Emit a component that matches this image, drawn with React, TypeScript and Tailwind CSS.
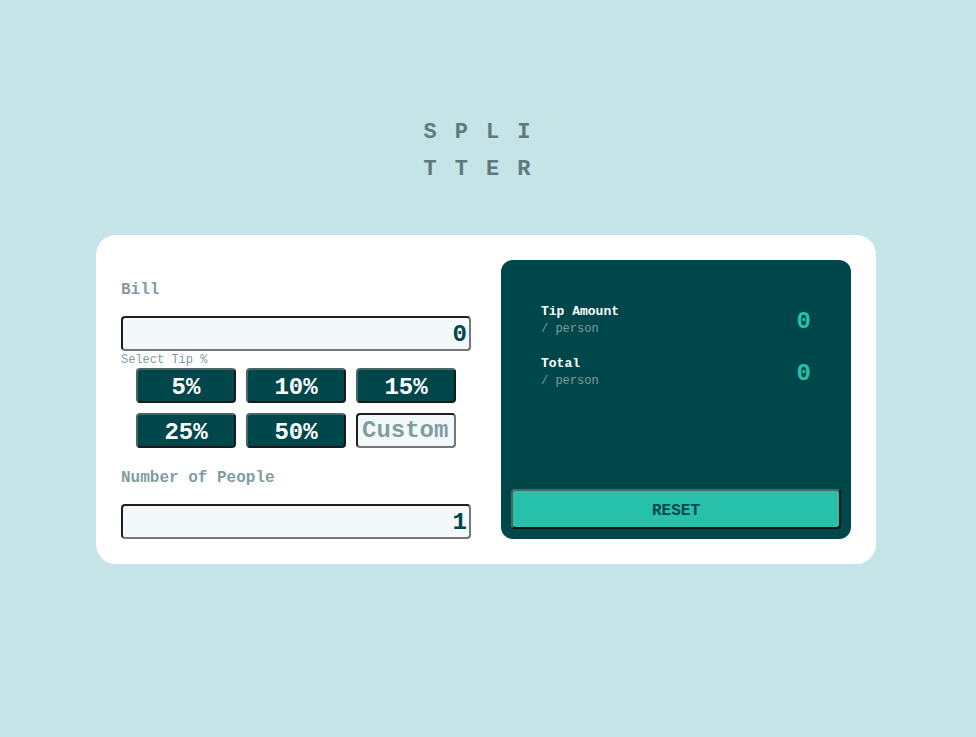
import { useState } from 'react'

const TIPS = [5, 10, 15, 25, 50]

const MONO = { fontFamily: '"Liberation Mono", "DejaVu Sans Mono", monospace' }

function ResultRow({ label, value }: { label: string; value: string }) {
  return (
    <div className="flex h-[36px] items-center justify-between">
      <div>
        <p className="text-[13px] leading-[18px] font-bold text-white">{label}</p>
        <p className="text-[12px] leading-[16px] text-[#7f9d9f]">/ person</p>
      </div>
      <span className="pt-[3px] text-[24px] leading-none font-bold text-[#26c0ab]">{value}</span>
    </div>
  )
}

export default function App() {
  const [bill, setBill] = useState('0')
  const [people, setPeople] = useState('1')
  const [custom, setCustom] = useState('')

  const inputCls =
    'h-[35px] w-full rounded-[4px] border-2 border-t-[#1f1f1f] border-l-[#1f1f1f] border-b-[#767676] border-r-[#767676] bg-[#f3f9fa] px-[2px] pt-[3px] text-right text-[24px] font-bold text-[#00474b] outline-none'

  return (
    <div className="flex min-h-screen flex-col items-center bg-[#c5e4e7] pt-[114px]" style={MONO}>
      <h1 className="mr-[4px] text-center text-[22px] leading-[37px] font-bold tracking-[18px] text-[#5e7a7d]">
        SPLI
        <br />
        TTER
      </h1>

      <div className="mt-[47px] mr-[4px] flex w-[780px] gap-[30px] rounded-[20px] bg-white p-[25px]">
        {/* Inputs */}
        <div className="flex w-[350px] flex-col">
          <label className="mt-[18px] text-[16px] leading-[24px] font-bold text-[#7f9d9f]">Bill</label>
          <input
            value={bill}
            onChange={e => setBill(e.target.value)}
            className={'mt-[14px] ' + inputCls}
          />

          <p className="mt-[2px] text-[12px] leading-[14px] text-[#7f9d9f]">Select Tip %</p>
          <div className="mx-auto mt-[1px] grid w-[320px] grid-cols-3 gap-[10px]">
            {TIPS.map(t => (
              <button
                key={t}
                type="button"
                className="h-[35px] rounded-[4px] border-2 border-t-[#4a6768] border-l-[#4a6768] border-b-[#1a1a1a] border-r-[#1a1a1a] bg-[#00474b] pt-[4px] text-[24px] leading-none font-bold text-white"
              >
                {t}%
              </button>
            ))}
            <input
              value={custom}
              onChange={e => setCustom(e.target.value)}
              placeholder="Custom"
              className="h-[35px] w-[100px] rounded-[4px] border-2 border-t-[#1f1f1f] border-l-[#1f1f1f] border-b-[#767676] border-r-[#767676] bg-[#f3f9fa] px-[4px] pt-[1px] text-[24px] font-bold text-[#00474b] outline-none placeholder:text-[#7f9d9f]"
            />
          </div>

          <label className="mt-[18px] text-[16px] leading-[24px] font-bold text-[#7f9d9f]">
            Number of People
          </label>
          <input
            value={people}
            onChange={e => setPeople(e.target.value)}
            className={'mt-[14px] ' + inputCls}
          />
        </div>

        {/* Results */}
        <div className="flex w-[350px] flex-col rounded-[12px] bg-[#00474b]">
          <div className="flex flex-col gap-[16px] px-[40px] pt-[42px]">
            <ResultRow label="Tip Amount" value="0" />
            <ResultRow label="Total" value="0" />
          </div>
          <button
            type="button"
            onClick={() => { setBill('0'); setPeople('1'); setCustom('') }}
            className="mx-[10px] mt-auto mb-[10px] h-[40px] rounded-[4px] border-2 border-t-[#4a6768] border-l-[#4a6768] border-b-[#111] border-r-[#111] bg-[#26c0ab] pt-[3px] text-[16px] font-bold text-[#00474b]"
          >
            RESET
          </button>
        </div>
      </div>
    </div>
  )
}
